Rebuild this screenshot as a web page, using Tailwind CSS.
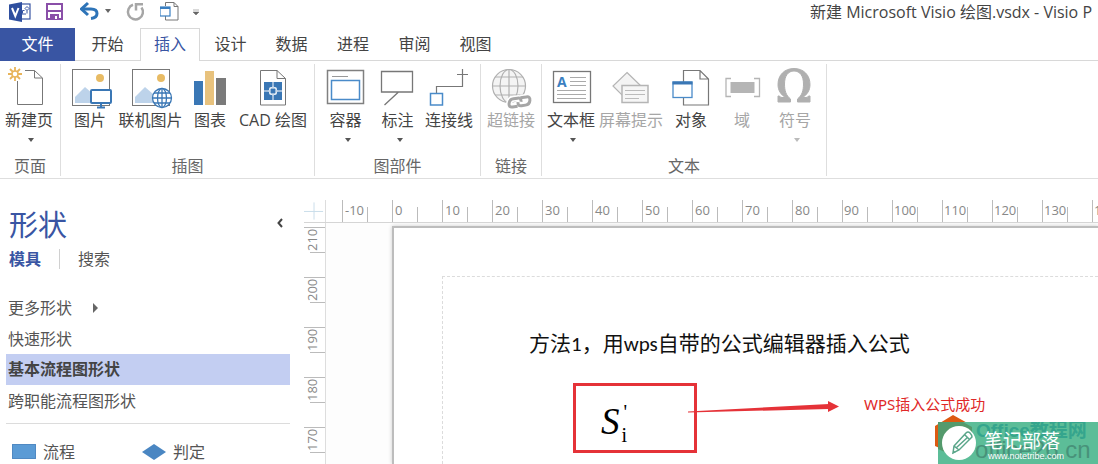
<!DOCTYPE html>
<html lang="zh-CN">
<head>
<meta charset="utf-8">
<meta name="viewport" content="width=device-width, initial-scale=1">
<title>新建 Microsoft Visio 绘图.vsdx</title>
<script src="https://cdn.jsdelivr.net/npm/@tailwindcss/browser@4"></script>
</head>
<body class="flex h-screen flex-col overflow-hidden bg-white font-['Open_Sans','Noto_Sans_CJK_SC',sans-serif] text-base leading-5 text-[#444]">

<!-- Title bar -->
<header class="flex h-7 shrink-0 items-start overflow-hidden whitespace-nowrap">
  <div class="flex w-[810px] shrink-0 items-center pl-2">
    <svg class="h-6 w-6" viewBox="0 0 24 24" aria-label="Visio"><rect x="12" y="4" width="10" height="15" fill="#fff" stroke="#3955a3" stroke-width="1.2"/><path d="M14.500 13.500v-3h2M17 8.500l2-2 2 2-2 2zM19 10.500v3M14 14h4" fill="none" stroke="#3955a3"/><path d="M1 4.500 14 2v20L1 19.500z" fill="#2f4f9f"/><path d="M4 8l3.300 8L10.500 8" fill="none" stroke="#fff" stroke-width="2"/></svg>
    <button class="ml-3 h-6 w-6" aria-label="保存"><svg viewBox="0 0 24 24"><path d="M3 4h15v15H3z" fill="#fff" stroke="#8a4fa8" stroke-width="2"/><path d="M4 11h13" stroke="#8a4fa8" stroke-width="2"/><path d="M6 14h9v5H6z" fill="#8a4fa8"/><path d="M11 16h2v3h-2z" fill="#fff"/></svg></button>
    <button class="ml-3 h-6 w-5" aria-label="撤消"><svg viewBox="0 0 20 24"><path d="M2 9h9c4 0 6 2 6 4.500S15 18 11 18.500" fill="none" stroke="#2e74b8" stroke-width="3"/><path d="M8 3 1.500 9 8 15" fill="none" stroke="#2e74b8" stroke-width="3"/></svg></button>
    <button class="ml-1 h-6 w-2" aria-label="撤消列表"><svg viewBox="0 0 8 24"><path d="M1 9h6l-3 4z" fill="#666"/></svg></button>
    <button class="ml-3 h-6 w-6" aria-label="重复"><svg viewBox="0 0 24 24"><path d="M9 4.800A7.500 7.500 0 1 0 17.500 7.500" fill="none" stroke="#a6a6a6" stroke-width="2.500"/><path d="M12 3v7.500M11 4.200h8" fill="none" stroke="#a6a6a6" stroke-width="2.500"/></svg></button>
    <button class="ml-3 h-6 w-6" aria-label="新建文档"><svg viewBox="0 0 24 24"><path d="M5.500 6V2.500H14l4 4V20H5.500v-4M14 2.500v4h4" fill="none" stroke="#777"/><rect x="0" y="7" width="10" height="9" fill="#fff" stroke="#3a7fc1" stroke-width="1.200"/><path d="M0 8h10" stroke="#3a7fc1" stroke-width="2"/></svg></button>
    <button class="ml-2 h-6 w-2" aria-label="自定义快速访问工具栏"><svg viewBox="0 0 8 24"><path d="M1 10h6M1 12h6l-3 3z" fill="#666" stroke="#666" stroke-width=".5"/></svg></button>
  </div>
  <div class="pt-[2px]">新建 Microsoft Visio 绘图.vsdx - Visio P</div>
</header>

<!-- Ribbon tabs -->
<nav class="flex h-[33px] shrink-0 text-[#444]">
  <button class="w-[75px] bg-[#3955a3] pb-px text-white">文件</button>
  <div class="flex flex-1 border-b border-[#d8d8d8]">
    <button class="w-[65px]">开始</button>
    <button class="-mb-px w-[60px] border border-b-0 border-[#d8d8d8] bg-white pb-[2px] text-[#3955a3]">插入</button>
    <button class="w-[61px]">设计</button>
    <button class="w-[61px]">数据</button>
    <button class="w-[62px]">进程</button>
    <button class="w-[61px]">审阅</button>
    <button class="w-[61px]">视图</button>
  </div>
</nav>

<!-- Ribbon -->
<section class="flex h-[118px] shrink-0 border-b border-[#dedede] pt-[3px] pb-[2px] whitespace-nowrap">
  <div class="flex w-[61px] flex-col border-r border-[#dedede]">
    <div class="flex flex-1">
      <button class="flex w-[58px] flex-col items-center pt-[3px]">
        <svg class="mb-px h-[42px] w-11" viewBox="0 0 44 42"><path d="M10.500 14V37.500h25V11l-8-7.500H18M27.500 3.500V11h8" fill="none" stroke="#777"/><g stroke="#e8b45a" stroke-width="1.800"><path d="M8 0v4M8 10v4M1 7h4M11 7h4M3 2l3 3M10 9l3 3M13 2l-3 3M6 9l-3 3"/></g><circle cx="8" cy="7" r="3" fill="#fff" stroke="#e8b45a" stroke-width="1.500"/></svg>
        <span>新建页</span>
        <svg class="mt-2 ml-1 h-1 w-2" viewBox="0 0 8 4"><path d="M1 0h6L4 4z" fill="#555"/></svg>
      </button>
    </div>
    <div class="text-center text-[#666]">页面</div>
  </div>

  <div class="flex w-[254px] flex-col border-r border-[#dedede]">
    <div class="flex flex-1">
      <button class="flex w-[58px] flex-col items-center pt-[3px]">
        <svg class="mb-px h-[42px] w-11" viewBox="0 0 44 42"><rect x="4.500" y="2.500" width="37" height="36" fill="#fff" stroke="#777"/><path d="M7 36v-6l10-10 8 7v9z" fill="#bdd3ea"/><circle cx="32" cy="11" r="4" fill="#e8bb64"/><rect x="23" y="23" width="20" height="13" rx="1" fill="#fff" stroke="#3a77b5" stroke-width="2"/><path d="M33 37v3M29 40.500h8" stroke="#3a77b5" stroke-width="2"/></svg>
        <span>图片</span>
      </button>
      <button class="flex w-[63px] flex-col items-center pt-[3px]">
        <svg class="mb-px h-[42px] w-11" viewBox="0 0 44 42"><rect x="3.500" y="2.500" width="37" height="36" fill="#fff" stroke="#777"/><path d="M6 36v-6l10-10 8 7v9z" fill="#bdd3ea"/><circle cx="32" cy="11" r="4" fill="#e8bb64"/><g fill="#fff" stroke="#3a77b5" stroke-width="1.300"><circle cx="33" cy="31" r="9.500"/><ellipse cx="33" cy="31" rx="4.500" ry="9.500"/><path d="M23.500 31h19M25 26h16M25 36h16M33 21.500v19"/></g></svg>
        <span>联机图片</span>
      </button>
      <button class="flex w-14 flex-col items-center pt-[3px]">
        <svg class="mb-px h-[42px] w-11" viewBox="0 0 44 42"><path d="M6 14h9v24H6z" fill="#3a77b5"/><path d="M17 4h9v34h-9z" fill="#e8c27d"/><path d="M28 11h10v27H28z" fill="#7a7a7a"/></svg>
        <span>图表</span>
      </button>
      <button class="flex w-[70px] flex-col items-center pt-[3px]">
        <svg class="mb-px h-[42px] w-11" viewBox="0 0 44 42"><path d="M9.500 3.500H26l8.500 8V38h-25zM26 3.500v8h8.500" fill="#fff" stroke="#777"/><path d="M13 15h18v18H13z" fill="#3a77b5"/><path d="M22 15v5M22 28v5M13 24h5M26 24h5" stroke="#fff"/><rect x="19" y="21" width="6" height="6" fill="none" stroke="#fff"/><circle cx="22" cy="24" r="4" fill="none" stroke="#fff" stroke-width=".7"/></svg>
        <span>CAD 绘图</span>
      </button>
    </div>
    <div class="text-center text-[#666]">插图</div>
  </div>

  <div class="flex w-[166px] flex-col border-r border-[#dedede]">
    <div class="flex flex-1 pl-1">
      <button class="flex w-[53px] flex-col items-center pt-[3px]">
        <svg class="mb-px h-[42px] w-11" viewBox="0 0 44 42"><rect x="3.500" y="3.500" width="36" height="33" fill="#fff" stroke="#808080" stroke-width="1.500"/><path d="M8 9.500h16" stroke="#999"/><rect x="7.500" y="13.500" width="28" height="19" fill="#fff" stroke="#4a8bc9" stroke-width="1.500"/></svg>
        <span>容器</span>
        <svg class="mt-2 ml-1 h-1 w-2" viewBox="0 0 8 4"><path d="M1 0h6L4 4z" fill="#555"/></svg>
      </button>
      <button class="flex w-[51px] flex-col items-center pt-[3px]">
        <svg class="mb-px h-[42px] w-11" viewBox="0 0 44 42"><path d="M5.500 4.500h31v20.500h-31zM22.500 25 8.500 38" fill="none" stroke="#777" stroke-width="1.300"/></svg>
        <span>标注</span>
        <svg class="mt-2 ml-1 h-1 w-2" viewBox="0 0 8 4"><path d="M1 0h6L4 4z" fill="#555"/></svg>
      </button>
      <button class="flex w-[52px] flex-col items-center pt-[3px]">
        <svg class="mb-px h-[42px] w-11" viewBox="0 0 44 42"><path d="M9.500 26v-6.500H35.500V2M30 7.500h11" fill="none" stroke="#777" stroke-width="1.200"/><rect x="3.500" y="26.500" width="12" height="11.500" fill="#fff" stroke="#4a8bc9" stroke-width="1.500"/></svg>
        <span>连接线</span>
      </button>
    </div>
    <div class="text-center text-[#666]">图部件</div>
  </div>

  <div class="flex w-[61px] flex-col border-r border-[#dedede]">
    <div class="flex flex-1 justify-center">
      <button class="flex flex-col items-center pt-[3px] text-[#a6a6a6]" disabled>
        <svg class="mb-px h-[42px] w-11" viewBox="0 0 44 42"><g fill="none" stroke="#b0b0b0" stroke-width="1.200"><circle cx="20" cy="19" r="16.500" fill="#f4f4f4"/><ellipse cx="20" cy="19" rx="9" ry="16.500"/><path d="M20 2.500v33M3.500 19h33M6 10h28M6 28h28"/></g><g fill="none" stroke-linejoin="round" transform="rotate(-8 30 35)"><g stroke="#fff" stroke-width="6"><path d="M28 39h-5q-4 0-3-4t5-4h4q4 0 3 4"/><path d="M32 31h6q4 0 3 4t-5 4h-4q-4 0-3-4"/></g><g stroke="#a6a6a6" stroke-width="3"><path d="M28 39h-5q-4 0-3-4t5-4h4q4 0 3 4"/><path d="M32 31h6q4 0 3 4t-5 4h-4q-4 0-3-4"/></g></g></svg>
        <span>超链接</span>
      </button>
    </div>
    <div class="text-center text-[#666]">链接</div>
  </div>

  <div class="flex w-[285px] flex-col border-r border-[#dedede]">
    <div class="flex flex-1">
      <button class="flex w-[58px] flex-col items-center pt-[3px]">
        <svg class="mb-px h-[42px] w-11" viewBox="0 0 44 42"><rect x="4.500" y="4.500" width="37" height="31" fill="#fff" stroke="#777" stroke-width="1.300"/><path d="M21 10.500h16M21 14.500h16M21 18.500h16M8 23.500h29M8 27.500h29M8 31.500h29" stroke="#aaa"/><text x="8" y="20" font-size="14" font-weight="700" fill="#3a7fc1">A</text></svg>
        <span>文本框</span>
        <svg class="mt-2 ml-1 h-1 w-2" viewBox="0 0 8 4"><path d="M1 0h6L4 4z" fill="#555"/></svg>
      </button>
      <button class="flex w-[62px] flex-col items-center pt-[3px] text-[#a6a6a6]" disabled>
        <svg class="mb-px h-[42px] w-11" viewBox="0 0 44 42"><path d="M18 5.500 32 19 18 33 4 19z" fill="#f4f4f4" stroke="#b5b5b5" stroke-width="1.200"/><rect x="13" y="18.500" width="26" height="17" fill="#f6f6f6" stroke="#b5b5b5" stroke-width="1.500"/><path d="M16 23.500h20M16 27.500h20M16 31.500h14" stroke="#bbb"/></svg>
        <span>屏幕提示</span>
      </button>
      <button class="flex w-[58px] flex-col items-center pt-[3px]">
        <svg class="mb-px h-[42px] w-11" viewBox="0 0 44 42"><path d="M14.500 3.500H31l8.500 8.500v26h-25zM31 3.500V12h8.500" fill="#fff" stroke="#777" stroke-width="1.200"/><rect x="4" y="15" width="19" height="15.500" fill="#fff" stroke="#4a8bc9" stroke-width="1.300"/><path d="M3.500 16h20" stroke="#3a77b5" stroke-width="3"/></svg>
        <span>对象</span>
      </button>
      <button class="flex w-11 flex-col items-center pt-[3px] text-[#a6a6a6]" disabled>
        <svg class="mb-px h-[42px] w-11" viewBox="0 0 44 42"><path d="M11 11.500H6v18h5M34 11.500h5.500v18H34" fill="none" stroke="#b5b5b5" stroke-width="1.300"/><path d="M10.500 15h24v11h-24z" fill="#b5b5b5"/></svg>
        <span>域</span>
      </button>
      <button class="flex w-[62px] flex-col items-center pt-[3px] text-[#a6a6a6]" disabled>
        <svg class="mb-px h-[42px] w-11" viewBox="0 0 44 42"><path d="M5 35h12.500v-3C13 28.500 11.500 23.500 11.500 17 11.500 9 15 4 21 4S30.500 9 30.500 17c0 6.500-1.500 11.500-6 15v3H37v-6h-1.500q-.5 1.500-2.500 1.500h-3.500c5-3 7.500-7.500 7.500-13C37 8 30.500 1.500 21 1.500S5 8 5 17.500c0 5.500 2.500 10 7.500 13H9q-2 0-2.500-1.500H5z" fill="#b0b0b0" stroke="#b0b0b0"/></svg>
        <span>符号</span>
        <svg class="mt-2 ml-1 h-1 w-2" viewBox="0 0 8 4"><path d="M1 0h6L4 4z" fill="#bbb"/></svg>
      </button>
    </div>
    <div class="text-center text-[#666]">文本</div>
  </div>
</section>

<!-- Workspace -->
<main class="flex min-h-0 flex-1">
  <aside class="w-[304px] shrink-0 pr-[14px] pl-[6px] text-[#555]">
    <div class="flex items-center justify-between pt-[26px] pr-1 pl-[3px]">
      <h1 class="text-[29px] leading-10 text-[#3955a3]">形状</h1>
      <button class="pb-1" aria-label="折叠窗格"><svg class="h-3 w-3" viewBox="0 0 12 12"><path d="M8 2 4.500 6 8 10" fill="none" stroke="#444" stroke-width="2"/></svg></button>
    </div>
    <div class="flex items-center pt-1 pl-[3px]">
      <button class="font-bold text-[#3955a3]">模具</button>
      <span class="ml-[18px] h-5 w-px bg-[#d0d0d0]"></span>
      <button class="ml-[18px]">搜索</button>
    </div>
    <ul class="pt-6">
      <li><button class="flex h-[30px] w-full items-center pl-[2px]">更多形状<svg class="ml-5 h-3 w-[7px]" viewBox="0 0 7 12"><path d="M1 1v10l5-5z" fill="#666"/></svg></button></li>
      <li><button class="flex h-[31px] w-full items-center pl-[2px]">快速形状</button></li>
      <li><button class="flex h-[31px] w-full items-center bg-[#c3cef2] pb-[2px] pl-[2px] font-bold text-[#444]">基本流程图形状</button></li>
      <li><button class="flex h-[32px] w-full items-center pl-[2px]">跨职能流程图形状</button></li>
    </ul>
    <div class="mt-[6px] flex border-t border-[#dcdcdc] pt-[18px] pl-[6px]">
      <button class="flex w-[130px] items-center gap-[7px]"><svg class="h-4 w-6" viewBox="0 0 24 16"><path d="M0 0h24v15H0z" fill="#5b9bd5"/><path d="M.5.5h23v14H.5z" fill="none" stroke="#5089c2"/></svg>流程</button>
      <button class="flex items-center gap-[7px]"><svg class="h-4 w-6" viewBox="0 0 24 16"><path d="M12 0l12 8-12 8L0 8z" fill="#4a86c2"/></svg>判定</button>
    </div>
  </aside>

  <div class="flex min-w-0 flex-1 flex-col pt-[21px] text-[13px] leading-4 text-[#888]">
    <!-- Horizontal ruler -->
    <div class="flex h-[23px] shrink-0 overflow-hidden border-b border-[#d5d5d5]">
      <svg class="h-[22px] w-[22px] shrink-0 border-r border-[#ddd]" viewBox="0 0 22 22"><path d="M0 11.500h20M10.500 2v18" stroke="#c8dcea"/></svg>
      <div class="flex items-end pl-4">
        <div class="flex h-[22px] w-[50px] shrink-0 border-l border-[#bbb]"><span class="w-[24px] pt-[2px] pl-[2px]">-10</span><i class="mt-[7px] border-l border-[#bbb]"></i></div>
        <div class="flex h-[22px] w-[50px] shrink-0 border-l border-[#bbb]"><span class="w-[24px] pt-[2px] pl-[2px]">0</span><i class="mt-[7px] border-l border-[#bbb]"></i></div>
        <div class="flex h-[22px] w-[50px] shrink-0 border-l border-[#bbb]"><span class="w-[24px] pt-[2px] pl-[2px]">10</span><i class="mt-[7px] border-l border-[#bbb]"></i></div>
        <div class="flex h-[22px] w-[50px] shrink-0 border-l border-[#bbb]"><span class="w-[24px] pt-[2px] pl-[2px]">20</span><i class="mt-[7px] border-l border-[#bbb]"></i></div>
        <div class="flex h-[22px] w-[50px] shrink-0 border-l border-[#bbb]"><span class="w-[24px] pt-[2px] pl-[2px]">30</span><i class="mt-[7px] border-l border-[#bbb]"></i></div>
        <div class="flex h-[22px] w-[50px] shrink-0 border-l border-[#bbb]"><span class="w-[24px] pt-[2px] pl-[2px]">40</span><i class="mt-[7px] border-l border-[#bbb]"></i></div>
        <div class="flex h-[22px] w-[50px] shrink-0 border-l border-[#bbb]"><span class="w-[24px] pt-[2px] pl-[2px]">50</span><i class="mt-[7px] border-l border-[#bbb]"></i></div>
        <div class="flex h-[22px] w-[50px] shrink-0 border-l border-[#bbb]"><span class="w-[24px] pt-[2px] pl-[2px]">60</span><i class="mt-[7px] border-l border-[#bbb]"></i></div>
        <div class="flex h-[22px] w-[50px] shrink-0 border-l border-[#bbb]"><span class="w-[24px] pt-[2px] pl-[2px]">70</span><i class="mt-[7px] border-l border-[#bbb]"></i></div>
        <div class="flex h-[22px] w-[50px] shrink-0 border-l border-[#bbb]"><span class="w-[24px] pt-[2px] pl-[2px]">80</span><i class="mt-[7px] border-l border-[#bbb]"></i></div>
        <div class="flex h-[22px] w-[50px] shrink-0 border-l border-[#bbb]"><span class="w-[24px] pt-[2px] pl-px">90</span><i class="mt-[7px] border-l border-[#bbb]"></i></div>
        <div class="flex h-[22px] w-[50px] shrink-0 border-l border-[#bbb]"><span class="w-[24px] pt-[2px] pl-px">100</span><i class="mt-[7px] border-l border-[#bbb]"></i></div>
        <div class="flex h-[22px] w-[50px] shrink-0 border-l border-[#bbb]"><span class="w-[24px] pt-[2px] pl-px">110</span><i class="mt-[7px] border-l border-[#bbb]"></i></div>
        <div class="flex h-[22px] w-[50px] shrink-0 border-l border-[#bbb]"><span class="w-[24px] pt-[2px] pl-px">120</span><i class="mt-[7px] border-l border-[#bbb]"></i></div>
        <div class="flex h-[22px] w-[50px] shrink-0 border-l border-[#bbb]"><span class="w-[24px] pt-[2px] pl-px">130</span><i class="mt-[7px] border-l border-[#bbb]"></i></div>
        <div class="flex h-[22px] w-[50px] shrink-0 border-l border-[#bbb]"><span class="w-[24px] pt-[2px] pl-px">140</span><i class="mt-[7px] border-l border-[#bbb]"></i></div>
      </div>
    </div>

    <div class="flex min-h-0 flex-1">
      <!-- Vertical ruler -->
      <div class="w-[22px] shrink-0 overflow-hidden border-r border-[#ddd] pt-1">
        <div class="h-[50px] border-t border-[#bbb]"><div class="h-[24px] w-4 rotate-180 pt-px [writing-mode:vertical-rl]">210</div><i class="ml-[6px] block border-t border-[#bbb]"></i></div>
        <div class="h-[50px] border-t border-[#bbb]"><div class="h-[24px] w-4 rotate-180 pt-px [writing-mode:vertical-rl]">200</div><i class="ml-[6px] block border-t border-[#bbb]"></i></div>
        <div class="h-[50px] border-t border-[#bbb]"><div class="h-[24px] w-4 rotate-180 pt-px [writing-mode:vertical-rl]">190</div><i class="ml-[6px] block border-t border-[#bbb]"></i></div>
        <div class="h-[50px] border-t border-[#bbb]"><div class="h-[24px] w-4 rotate-180 pt-px [writing-mode:vertical-rl]">180</div><i class="ml-[6px] block border-t border-[#bbb]"></i></div>
        <div class="h-[50px] border-t border-[#bbb]"><div class="h-[24px] w-4 rotate-180 pt-px [writing-mode:vertical-rl]">170</div><i class="ml-[6px] block border-t border-[#bbb]"></i></div>
      </div>

      <!-- Drawing canvas -->
      <div class="relative min-w-0 flex-1 overflow-hidden bg-[#fdfdfd] pt-[3px] pl-[66px]">
        <div class="h-full border-t-2 border-l-2 border-[#bdbdbd] bg-white pt-12 pl-12 shadow-[0_0_4px_#ccc]">
          <div class="h-full border-t border-l border-dashed border-[#dcdcdc]"></div>
        </div>

        <p class="absolute top-[105px] left-[203px] font-['Carlito','Lato','Noto_Sans_CJK_SC',sans-serif] text-[21px] leading-8 whitespace-nowrap text-[#111]">方法1，用wps自带的公式编辑器插入公式</p>

        <div class="absolute top-[160px] left-[247px] h-[70px] w-[124px] border-[3px] border-[#e53238] pt-4 pl-[25px] font-['Liberation_Serif',serif] text-black">
          <div class="flex leading-10">
            <i class="text-[37px]">S</i>
            <span class="flex flex-col gap-[3px] pl-[2px]"><span class="pl-[2px] text-xl leading-5">'</span><span class="text-xl leading-5">i</span></span>
          </div>
        </div>

        <svg class="absolute top-[176px] left-[362px] h-5 w-[152px]" viewBox="0 0 152 20"><path d="M0 12.500 141 5v5L0 13.500z" fill="#e53238"/><path d="M140 2l11 5.500-11 5.500z" fill="#e53238"/></svg>

        <p class="absolute top-[171px] left-[538px] font-['Noto_Sans','Noto_Sans_CJK_SC',sans-serif] text-[15px] leading-5 whitespace-nowrap text-[#e02828]">WPS插入公式成功</p>

        <!-- Site badge -->
        <svg class="absolute top-[192px] left-[608px] h-10 w-10" viewBox="0 0 40 40"><path d="M19 0l18 10v20L19 39 1 31V11z" fill="#dd5a12"/></svg>
        <div class="absolute right-0 bottom-0 h-[42px] w-[160px] overflow-hidden bg-[#5cbd98]">
          <svg class="absolute top-0 left-0 h-[42px] w-10" viewBox="0 0 40 42"><path d="M0 0h25l9 5v18L16 34 0 27z" fill="#549a6c"/></svg>
          <div class="absolute -top-[3px] left-[38px] font-['Liberation_Sans','Noto_Sans_CJK_SC',sans-serif] text-[19px] leading-6 font-bold whitespace-nowrap text-[#35a58d]">Office教程网</div>
          <div class="absolute top-[14px] left-[37px] font-['Liberation_Sans',sans-serif] text-2xl leading-7 whitespace-nowrap text-[#48927a]">office26.cn</div>
          <svg class="absolute top-1 left-1 h-[34px] w-[34px]" viewBox="0 0 34 34"><circle cx="17" cy="17" r="17" fill="#fff"/><path d="M12 20 24 7q2-2 4 0t2 4L17 24l-6 3zM23 9l5 5M12 20l5 4M14 22 26 11" fill="none" stroke="#5aa68a" stroke-width="1.500"/><path d="M10 28l2-3 2 1z" fill="#5aa68a"/></svg>
          <div class="absolute top-[8px] left-[46px] font-['Noto_Sans_CJK_SC',sans-serif] text-[19px] leading-5 whitespace-nowrap text-white">笔记部落</div>
          <div class="absolute top-[28px] left-[50px] font-['Liberation_Sans',sans-serif] text-[9px] leading-3 whitespace-nowrap text-white">www.notetribe.com</div>
        </div>
      </div>
    </div>
  </div>
</main>
</body>
</html>
